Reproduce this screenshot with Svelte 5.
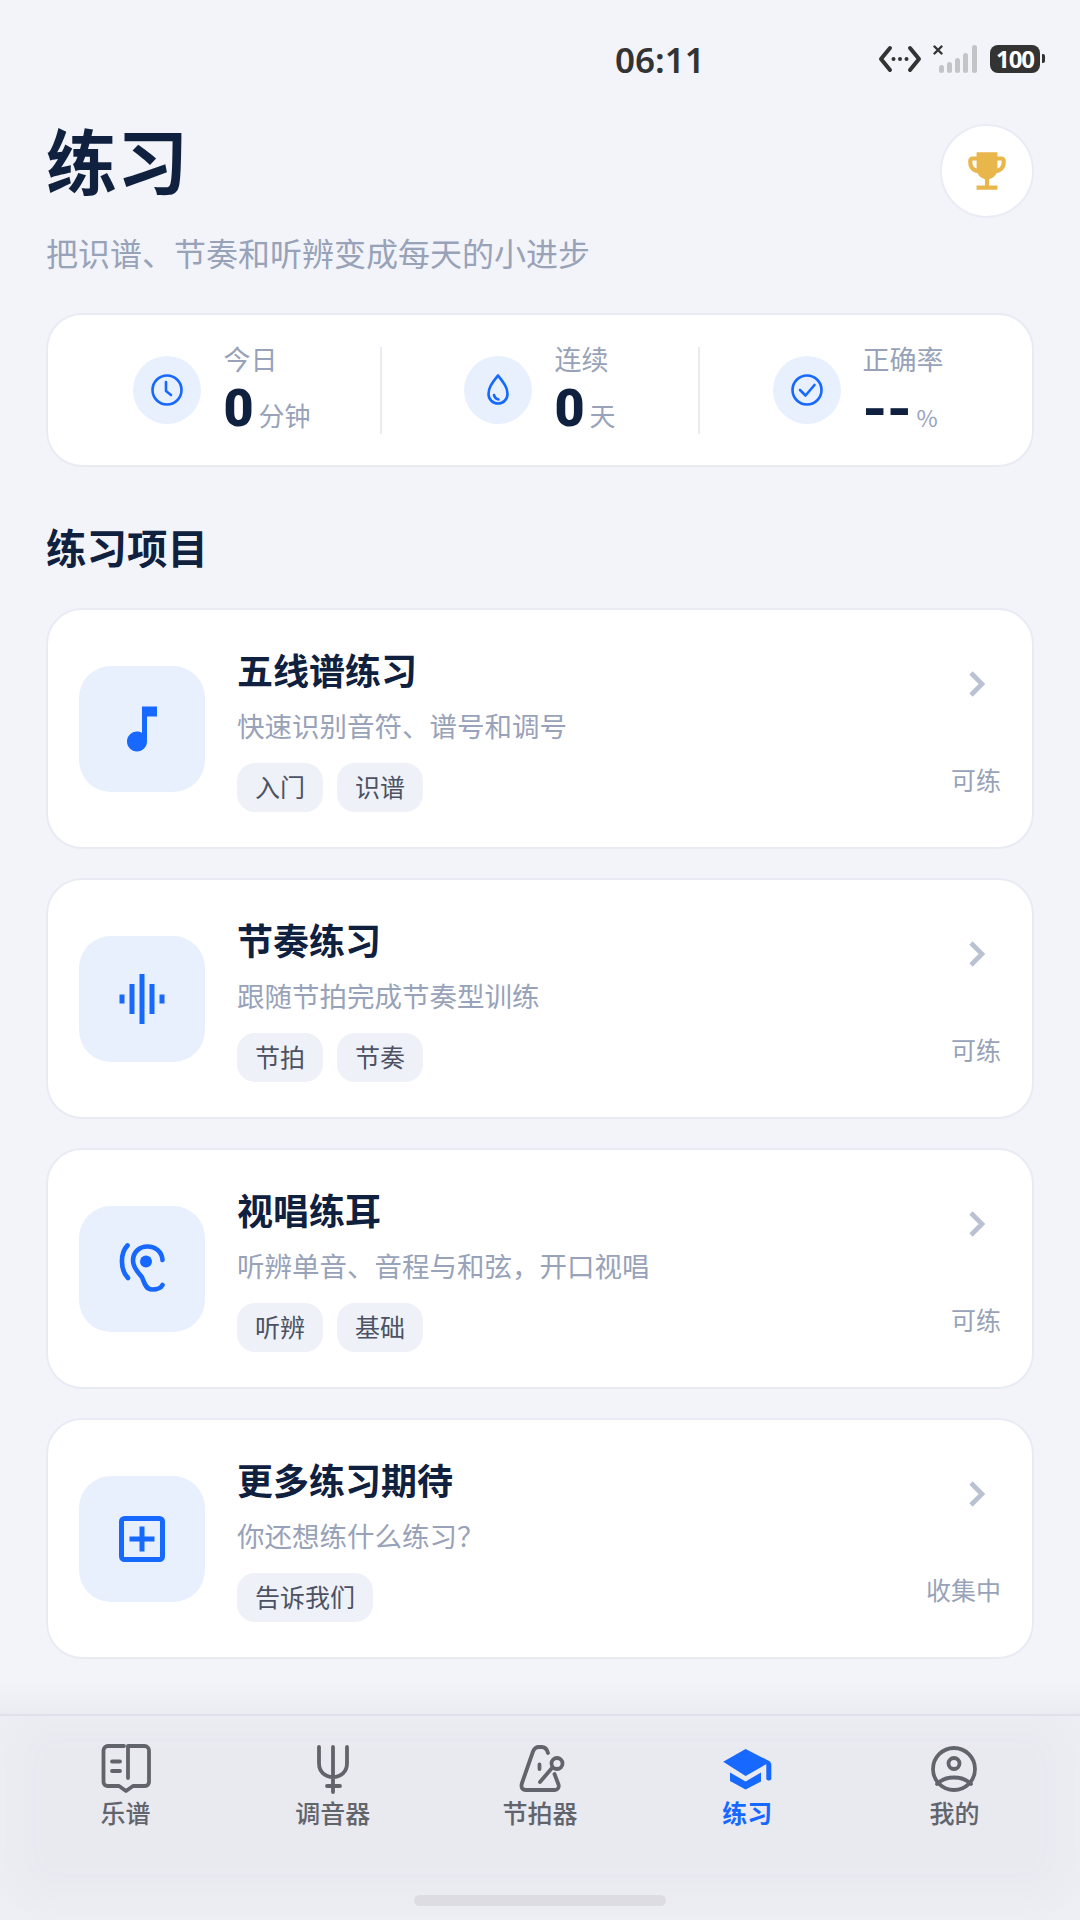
<script>
  const stats = [
    { label: "今日", value: "0", unit: "分钟", icon: "clock" },
    { label: "连续", value: "0", unit: "天", icon: "drop" },
    { label: "正确率", value: "--", unit: "%", icon: "check" },
  ];

  const items = [
    { title: "五线谱练习", desc: "快速识别音符、谱号和调号", tags: ["入门", "识谱"], state: "可练", icon: "note" },
    { title: "节奏练习", desc: "跟随节拍完成节奏型训练", tags: ["节拍", "节奏"], state: "可练", icon: "wave" },
    { title: "视唱练耳", desc: "听辨单音、音程与和弦，开口视唱", tags: ["听辨", "基础"], state: "可练", icon: "ear" },
    { title: "更多练习期待", desc: "你还想练什么练习？", tags: ["告诉我们"], state: "收集中", icon: "plus" },
  ];

  const tabs = [
    { label: "乐谱", icon: "book" },
    { label: "调音器", icon: "fork" },
    { label: "节拍器", icon: "metronome" },
    { label: "练习", icon: "cap", active: true },
    { label: "我的", icon: "user" },
  ];
</script>

<div class="page">
  <div class="status">
    <span class="time">06:11</span>
    <div class="status-icons">
      <svg width="44" height="28" viewBox="0 0 44 28" fill="none" stroke="#333" stroke-width="4" stroke-linecap="round" stroke-linejoin="round">
        <path d="M12 3 3 14l9 11M32 3l9 11-9 11" />
        <path d="M15.500 14h.01M22 14h.01M28.500 14h.01" />
      </svg>
      <svg class="signal" width="46" height="28" viewBox="0 0 46 28">
        <path d="M1.500 1.500l7 7M8.500 1.500l-7 7" stroke="#333" stroke-width="2.400" stroke-linecap="round" />
        <g fill="#c2c4c8">
          <rect x="6" y="20" width="5" height="8" rx="2.500" />
          <rect x="14" y="17" width="5" height="11" rx="2.500" />
          <rect x="22" y="13" width="5" height="15" rx="2.500" />
          <rect x="30" y="8" width="5" height="20" rx="2.500" />
          <rect x="39" y="0" width="5" height="28" rx="2.500" />
        </g>
      </svg>
      <div class="battery"><span>100</span></div>
    </div>
  </div>

  <main>
    <header>
      <div>
        <h1>练习</h1>
        <p class="sub">把识谱、节奏和听辨变成每天的小进步</p>
      </div>
      <div class="trophy">
        <svg width="50" height="50" viewBox="0 0 24 24" fill="#e8b64b">
          <path d="M19 5h-2V3H7v2H5c-1.100 0-2 .9-2 2v1c0 2.550 1.920 4.630 4.390 4.940.63 1.500 1.980 2.630 3.610 2.960V19H7v2h10v-2h-4v-3.100c1.630-.33 2.980-1.460 3.610-2.960C19.080 12.630 21 10.550 21 8V7c0-1.100-.9-2-2-2zM5 8V7h2v3.820C5.840 10.400 5 9.300 5 8zm14 0c0 1.300-.84 2.400-2 2.820V7h2v1z" />
        </svg>
      </div>
    </header>

    <section class="stats">
      {#each stats as s}
        <div class="stat">
          <div class="stat-icon">
            <svg width="36" height="36" viewBox="0 0 36 36" fill="none" stroke="#1668ff" stroke-width="2.600" stroke-linecap="round" stroke-linejoin="round">
              {#if s.icon === "clock"}
                <circle cx="18" cy="18" r="14.500" />
                <path d="M17 10v9l5 4" />
              {:else if s.icon === "drop"}
                <path d="M18 3.500C13 10 8.500 15 8.500 22a9.500 9.500 0 0 0 19 0C27.500 15 23 10 18 3.500z" />
                <path d="M14 23c.5 2.500 2 4 4.500 4.500" />
              {:else}
                <circle cx="18" cy="18" r="14.500" />
                <path d="M11 18l5.500 5.500L25.500 13" />
              {/if}
            </svg>
          </div>
          <div class="stat-text">
            <div class="stat-label">{s.label}</div>
            <div class="stat-value"><b class:dash={s.value === "--"}>{s.value}</b><span class:pct={s.unit === "%"}>{s.unit}</span></div>
          </div>
        </div>
      {/each}
    </section>

    <h2>练习项目</h2>

    <div class="list">
      {#each items as item}
        <article class="card">
          <div class="card-icon">
            {#if item.icon === "note"}
              <svg width="60" height="60" viewBox="0 0 24 24" fill="#1668ff">
                <path d="M12 3v10.550c-.59-.34-1.270-.55-2-.55-2.210 0-4 1.790-4 4s1.790 4 4 4 4-1.790 4-4V7h4V3h-6z" />
              </svg>
            {:else if item.icon === "wave"}
              <svg width="60" height="60" viewBox="0 0 60 60" fill="#1668ff">
                <rect x="7.500" y="25.500" width="5" height="9" />
                <rect x="17.500" y="15" width="5" height="30" />
                <rect x="27.500" y="5" width="5" height="50" />
                <rect x="37.500" y="15" width="5" height="30" />
                <rect x="47.500" y="25.500" width="5" height="9" />
              </svg>
            {:else if item.icon === "ear"}
              <svg width="60" height="60" viewBox="0 0 60 60" fill="none" stroke="#1668ff" stroke-width="4.600" stroke-linecap="round">
                <path d="M15.500 6.500C8 14 8 31 16 39" />
                <path d="M50.500 21C50 12.500 43 7.500 35.500 7.500 27 7.500 21 13.500 21 21.500c0 7.500 5 11.500 8.500 16 2.500 3.500 3 13 10.500 13 5 0 9-1.500 10.500-4.500" />
                <circle cx="34" cy="22.500" r="6" fill="#1668ff" stroke="none" />
              </svg>
            {:else}
              <svg width="60" height="60" viewBox="0 0 60 60" fill="none" stroke="#1668ff" stroke-width="5">
                <rect x="9.500" y="9.500" width="41" height="41" rx="3" />
                <path d="M17.500 30h25M30 17.500v25" />
              </svg>
            {/if}
          </div>
          <div class="card-body">
            <h3>{item.title}</h3>
            <p>{item.desc}</p>
            <div class="tags">
              {#each item.tags as tag}
                <span class="tag">{tag}</span>
              {/each}
            </div>
          </div>
          <div class="card-side">
            <svg class="chevron" width="32" height="32" viewBox="0 0 32 32" fill="none" stroke="#b9c1d2" stroke-width="4.600">
              <path d="M10 5l11 11-11 11" />
            </svg>
            <span class="state">{item.state}</span>
          </div>
        </article>
      {/each}
    </div>
  </main>

  <nav>
    <div class="tabs">
      {#each tabs as tab}
        <div class="tab" class:active={tab.active}>
          <svg width="56" height="56" viewBox="0 0 56 56" fill="none" stroke="#62646c" stroke-width="3.800" stroke-linecap="round" stroke-linejoin="round">
            {#if tab.icon === "book"}
              <path d="M26 5H10a4.500 4.500 0 0 0-4.500 4.500V41a4 4 0 0 0 4 4H21l7 5 7-5h12a4 4 0 0 0 4-4V9.500A4.500 4.500 0 0 0 46.500 5H30v32" />
              <path d="M14 20.500h8M14 30h8" />
            {:else if tab.icon === "fork"}
              <path d="M14 6v16c0 9 6 14 14 14s14-5 14-14V6M28 6v45M22 45h13" />
            {:else if tab.icon === "metronome"}
              <path d="M36 12c-1-4-3.500-6-6.500-6H27c-3 0-5 2-6 4.500L10 42c-1.300 4 0 7 4 7h29c3 0 4.300-3 3.500-5.500L42.500 33" />
              <circle cx="45" cy="22.500" r="5.500" />
              <path d="M40 27 28 41M27.500 23.500v4.500" />
            {:else if tab.icon === "cap"}
              <g fill="#1668ff" stroke="none">
                <path d="M26.600 8 51.500 20.700 26.600 35 4.200 20.700z" />
                <path d="M11 31.500 26.600 40.500 42 31.500V40.500L26.600 48.500 11 40z" />
                <rect x="47.300" y="21" width="5" height="18.500" rx="2.200" />
              </g>
            {:else}
              <circle cx="28" cy="28" r="21" />
              <circle cx="28" cy="22.500" r="5.500" />
              <path d="M11 43c5-5 11-6.500 17-6.500S40 38 45 43" />
            {/if}
          </svg>
          <span>{tab.label}</span>
        </div>
      {/each}
    </div>
    <div class="home-bar"></div>
  </nav>
</div>

<style>
  :global(body) {
    margin: 0;
    background: #f2f4f9;
    font-family: "Noto Sans CJK SC", "Noto Sans", sans-serif;
  }

  .page {
    width: 1080px;
    height: 1920px;
    display: flex;
    flex-direction: column;
    overflow: hidden;
    background: #f2f4f9;
  }

  .status {
    height: 118px;
    flex: none;
    display: flex;
    align-items: center;
    padding: 0 35px 0 615px;
  }

  .time {
    font-family: "Noto Sans", sans-serif;
    font-size: 35px;
    font-weight: 600;
    color: #333;
    line-height: 1;
  }

  .status-icons {
    margin-left: auto;
    display: flex;
    align-items: center;
    gap: 11px;
  }

  .battery {
    position: relative;
    width: 50px;
    height: 28px;
    background: #333;
    border-radius: 8px;
    display: flex;
    align-items: center;
    justify-content: center;
    margin-right: 5px;
  }

  .battery span {
    font-family: "Noto Sans", sans-serif;
    font-size: 24px;
    font-weight: 700;
    color: #fff;
    line-height: 1;
    letter-spacing: -1px;
  }

  .battery::after {
    content: "";
    position: absolute;
    left: 52px;
    top: 9px;
    width: 3px;
    height: 9px;
    background: #333;
    border-radius: 0 2px 2px 0;
  }

  main {
    padding: 0 46px;
  }

  header {
    display: flex;
    justify-content: space-between;
    align-items: flex-start;
  }

  h1 {
    margin: 0 0 34px;
    font-size: 71px;
    line-height: 80px;
    font-weight: 700;
    color: #10203f;
  }

  .sub {
    margin: 0;
    font-size: 32px;
    line-height: 40px;
    color: #98a2b8;
  }

  .trophy {
    margin-top: 6px;
    width: 94px;
    height: 94px;
    box-sizing: border-box;
    background: #fff;
    border: 2px solid #e9ecf4;
    border-radius: 50%;
    display: flex;
    align-items: center;
    justify-content: center;
  }

  .stats {
    margin-top: 41px;
    height: 154px;
    box-sizing: border-box;
    display: flex;
    align-items: center;
    padding: 0 16px;
    background: #fff;
    border: 2px solid #e8ebf3;
    border-radius: 36px;
  }

  .stat {
    flex: 1;
    height: 87px;
    display: flex;
    align-items: center;
    justify-content: center;
    gap: 22px;
    border-right: 2px solid #e8ebf3;
  }

  .stat:last-child {
    border-right: none;
  }

  .stat-icon {
    width: 68px;
    height: 68px;
    border-radius: 50%;
    background: #e8f0fe;
    display: flex;
    align-items: center;
    justify-content: center;
  }

  .stat-text {
    padding-bottom: 1px;
  }

  .stat-label {
    font-size: 27px;
    line-height: 34px;
    color: #98a2b8;
  }

  .stat-value {
    display: flex;
    align-items: baseline;
    margin-top: 4px;
    line-height: 58px;
    height: 58px;
  }

  .stat-value b {
    font-family: Roboto, sans-serif;
    font-size: 52px;
    font-weight: 900;
    color: #10203f;
  }

  .stat-value b.dash {
    font-family: Inter, sans-serif;
    font-weight: 800;
  }

  .stat-value span {
    margin-left: 5px;
    font-size: 26px;
    color: #98a2b8;
  }

  .stat-value span.pct {
    font-size: 23px;
  }

  h2 {
    margin: 55px 0 36px;
    font-size: 40.500px;
    line-height: 50px;
    font-weight: 700;
    color: #10203f;
  }

  .list {
    display: flex;
    flex-direction: column;
    gap: 29px;
  }

  .card {
    height: 241px;
    box-sizing: border-box;
    display: flex;
    align-items: center;
    padding: 35px 31px;
    background: #fff;
    border: 2px solid #e8ebf3;
    border-radius: 36px;
  }

  .card-icon {
    flex: none;
    width: 126px;
    height: 126px;
    border-radius: 32px;
    background: #e8f0fe;
    display: flex;
    align-items: center;
    justify-content: center;
  }

  .card-body {
    flex: 1;
    margin-left: 32px;
    padding-top: 2px;
  }

  h3 {
    margin: 0;
    font-size: 36px;
    line-height: 44px;
    font-weight: 700;
    color: #10203f;
  }

  .card-body p {
    margin: 14px 0 18px;
    font-size: 27.500px;
    line-height: 40px;
    color: #98a2b8;
  }

  .tags {
    display: flex;
    gap: 14px;
  }

  .tag {
    height: 49px;
    padding: 0 18px;
    border-radius: 18px;
    background: #eef1f7;
    font-size: 25px;
    line-height: 47px;
    color: #4c5263;
  }

  .card-side {
    align-self: stretch;
    display: flex;
    flex-direction: column;
    align-items: flex-end;
    justify-content: space-between;
    padding: 23px 0 15px;
  }

  .chevron {
    margin-right: 8px;
  }

  .state {
    font-size: 25px;
    line-height: 36px;
    color: #98a2b8;
  }

  nav {
    position: relative;
    margin-top: auto;
    height: 206px;
    box-sizing: border-box;
    display: flex;
    flex-direction: column;
    padding: 0 22px;
    background: #e9e9f0;
    border-top: 2px solid #dfe1ea;
    box-shadow: inset 0 -10px 50px #f0f1f6;
  }

  nav::before {
    content: "";
    position: absolute;
    left: 0;
    right: 0;
    top: -36px;
    height: 34px;
    background: linear-gradient(#f2f4f9, #ebecf1);
  }

  .tabs {
    display: flex;
    padding-top: 25px;
  }

  .tab {
    flex: 1;
    display: flex;
    flex-direction: column;
    align-items: center;
    margin-top: 0;
    font-size: 25px;
    line-height: 30px;
    font-weight: 500;
    color: #62646c;
  }

  .tab.active {
    color: #1668ff;
    font-weight: 700;
  }

  .home-bar {
    margin: auto auto 14px;
    width: 252px;
    height: 11px;
    border-radius: 6px;
    background: #dcdce2;
  }
</style>
